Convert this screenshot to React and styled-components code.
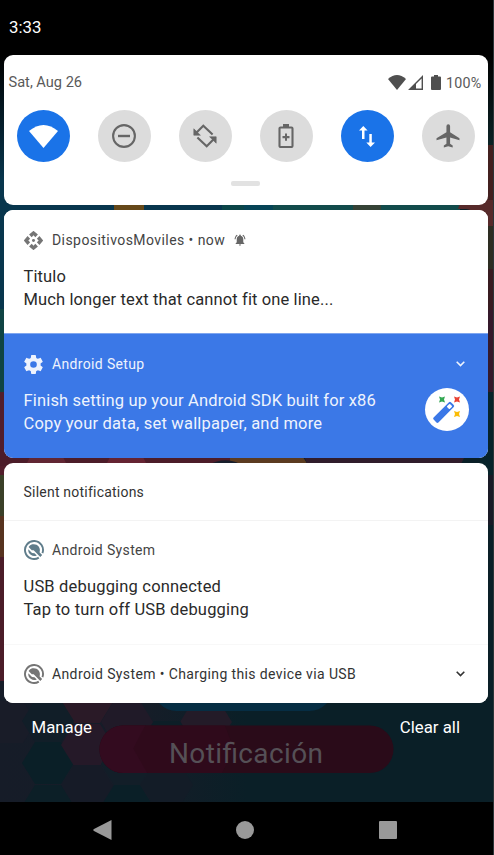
import React from "react";
import styled, { createGlobalStyle } from "styled-components";

const GlobalStyle = createGlobalStyle`
  *, *::before, *::after { box-sizing: border-box; }
  body { margin: 0; background: #000; }
`;

const Screen = styled.main`
  position: relative;
  display: flex;
  flex-direction: column;
  width: 494px;
  height: 855px;
  overflow: hidden;
  background: #0a1f27;
  border-right: 1px solid #2b3538;
  font-family: Roboto, "Liberation Sans", sans-serif;
  color: #2b2b2b;
`;

const Wallpaper = styled.svg`
  position: absolute;
  inset: 0;
  width: 493px;
  height: 855px;
`;

const Shade = styled.div`
  position: relative;
  display: flex;
  flex-direction: column;
  flex: 1;
`;

const StatusBar = styled.header`
  height: 55px;
  padding: 16px 9px 0;
  background: #000;
  color: #fff;
  font-size: 16.8px;
  line-height: 22px;
`;

const Panel = styled.section`
  width: 484px;
  height: ${(p) => p.$height}px;
  margin: 0 0 5px 4px;
  border-radius: 9px;
  background: #fff;
  overflow: hidden;
`;

const QuickHeader = styled.div`
  display: flex;
  align-items: center;
  justify-content: space-between;
  height: 20px;
  margin-top: 17px;
  padding: 0 6.500px 0 4.500px;
  color: #5a5a5a;
`;

const Label = styled.span`
  font-size: ${(p) => p.$size || 14}px;
  line-height: 20px;
  letter-spacing: ${(p) => p.$spacing || 0}px;
  white-space: pre;
`;

const Indicators = styled.div`
  display: flex;
  align-items: center;
  color: #4f4f4f;
`;

const BatteryLevel = styled(Label)`
  margin-top: 1px;
  color: #5a5a5a;
`;

const Gap = styled.span`
  width: ${(p) => p.$w}px;
`;

const Tiles = styled.div`
  display: flex;
  justify-content: space-between;
  margin-top: 18px;
  padding: 0 13.200px 0 12.800px;
`;

const Tile = styled.button`
  display: flex;
  align-items: center;
  justify-content: center;
  width: 53px;
  height: 52px;
  padding: 0;
  border: 0;
  border-radius: 50%;
  background: ${(p) => (p.$active ? "#1a73e8" : "#dcdcdc")};
  color: ${(p) => (p.$active ? "#fff" : "#666")};
`;

const Handle = styled.div`
  width: 29px;
  height: 5px;
  margin: 19px 0 0 227px;
  border-radius: 2px;
  background: #e2e2e2;
`;

const Notification = styled.article`
  height: ${(p) => p.$height}px;
  padding: ${(p) => p.$top}px 19px 0 19.500px;
  border-top: ${(p) => (p.$divider ? `1px solid ${p.$divider}` : "0")};
  background: ${(p) => (p.$blue ? "#3b78e7" : "#fff")};
  color: ${(p) => (p.$blue ? "#eef3fd" : "#2a2a2a")};
`;

const NotificationHeader = styled.div`
  display: flex;
  align-items: center;
  height: 20px;
  color: ${(p) => p.$color || "inherit"};
`;

const IconSlot = styled.span`
  display: flex;
  flex: none;
  width: 28.500px;
  padding-left: 0.500px;
  color: ${(p) => p.$color || "inherit"};
`;

const Trailing = styled.span`
  display: flex;
  margin-left: auto;
  padding-right: 4px;
`;

const BellSlot = styled.span`
  display: flex;
  margin-left: 8.500px;
  color: #666;
`;

const Body = styled.div`
  display: flex;
  justify-content: space-between;
  margin-top: 15px;
`;

const Lines = styled.div`
  display: flex;
  flex-direction: column;
`;

const Line = styled.p`
  margin: 0;
  font-size: 16.5px;
  line-height: 23.3px;
  letter-spacing: ${(p) => p.$spacing || 0}px;
  white-space: nowrap;
`;

const Avatar = styled.div`
  display: flex;
  width: 44px;
  height: 43px;
  margin-top: -1px;
  border-radius: 50%;
  background: #fff;
`;

const SectionTitle = styled.h2`
  display: flex;
  align-items: center;
  height: 57px;
  margin: 0;
  padding: 0 19.500px;
  font-weight: 400;
  color: #333;
`;

const Actions = styled.div`
  display: flex;
  justify-content: space-between;
  margin-top: 9px;
  padding: 0 33px 0 31.500px;
  color: #fff;
`;

const NavBar = styled.nav`
  position: relative;
  display: flex;
  align-items: center;
  justify-content: space-between;
  height: 53px;
  padding: 3px 96px 0 92.500px;
  background: #000;
  color: #999;
`;

const CoveredLabel = styled.text`
  font-family: Roboto, "Liberation Sans", sans-serif;
  font-size: 28px;
  fill: #555056;
`;

const hexes = [
  [10, 722, "#191c28"], [87, 702, "#2a1a27"], [48, 721, "#111e28"],
  [48, 763, "#0a1f27"], [87, 745, "#251928"], [206, 722, "#231b28"],
  [127, 722, "#201a28"], [167, 742, "#0d1e27"], [87, 786, "#161b27"],
  [127, 764, "#121e28"], [127, 806, "#0a1f27"], [48, 806, "#0c1f27"],
  [167, 785, "#131c27"],
];

function hexPoints(x, y) {
  return `${x - 26},${y} ${x - 13},${y - 21} ${x + 13},${y - 21} ${x + 26},${y} ${x + 13},${y + 21} ${x - 13},${y + 21}`;
}

function Backdrop() {
  return (
    <Wallpaper viewBox="0 0 493 855" preserveAspectRatio="none">
      <defs>
        <linearGradient id="sky" x1="0" y1="0" x2="0" y2="1">
          <stop offset="0" stopColor="#000" />
          <stop offset="1" stopColor="#08364d" />
        </linearGradient>
        <linearGradient id="dusk" x1="0" y1="0" x2="0" y2="1">
          <stop offset="0" stopColor="#000" />
          <stop offset="1" stopColor="#0b2225" />
        </linearGradient>
        <linearGradient id="floor" x1="0" y1="0" x2="1" y2="0">
          <stop offset="0" stopColor="#161c28" />
          <stop offset=".3" stopColor="#151d28" />
          <stop offset=".5" stopColor="#0a1f27" />
        </linearGradient>
      </defs>
      <rect width="493" height="855" fill="#0a1f27" />
      <rect y="55" width="247" height="125" fill="url(#sky)" />
      <rect y="180" width="247" height="130" fill="#08364d" />
      <rect y="309" width="12" height="83" fill="#0f4444" />
      <rect y="392" width="12" height="83" fill="#521e2b" />
      <rect y="475" width="12" height="41" fill="#3a4028" />
      <rect y="516" width="12" height="41" fill="#57331f" />
      <rect y="557" width="12" height="124" fill="#4b1c28" />
      <rect x="470" y="55" width="23" height="90" fill="url(#dusk)" />
      <rect x="480" y="145" width="13" height="75" fill="#43201f" />
      <rect x="480" y="220" width="13" height="49" fill="#2d2d22" />
      <rect x="480" y="269" width="13" height="41" fill="#381b20" />
      <rect x="480" y="310" width="13" height="82" fill="#35192b" />
      <rect x="480" y="392" width="13" height="83" fill="#07232a" />
      <rect x="480" y="475" width="13" height="50" fill="#191a26" />
      <rect x="114" y="204" width="30" height="8" fill="#654819" />
      <rect x="222" y="204" width="22" height="8" fill="#0b4548" />
      <rect x="244" y="204" width="29" height="8" fill="#064456" />
      <rect x="273" y="204" width="80" height="8" fill="#124b4b" />
      <rect x="353" y="204" width="28" height="8" fill="#354236" />
      <rect x="381" y="204" width="79" height="8" fill="#124b4b" />
      <path d="M461 200h32v26h-9q-7-16-18-17h-8z" fill="#572a2a" />
      <path d="M0 450h239l5 16H0z" fill="#4c1c29" />
      <path d="M30 457h33l4 8H26z" fill="#612633" />
      <path d="M110 457h33l4 8h-41z" fill="#652332" />
      <path d="M230 457h73l5 8h-78z" fill="#5b3b20" />
      <path d="M208 465q17-9 32-1l5 2z" fill="#171e2b" />
      <path d="M304 456h161l-5 10H308z" fill="#301c2b" />
      <rect y="681" width="493" height="122" fill="url(#floor)" />
      {hexes.map(([x, y, fill], i) => (
        <polygon key={i} points={hexPoints(x, y)} fill={fill} />
      ))}
      <rect x="153" y="664" width="180" height="47" rx="23.5" fill="#062d43" />
      <rect x="99.5" y="725.5" width="294" height="47.5" rx="23.7" fill="#2a0b19" />
      <path d="M123.3 725.5H225l9 24-12 23.500h-98.700a23.700 23.700 0 0 1 0-47.500z" fill="#2f0a1b" />
      <path d="M123.3 725.5h22l-12 23 14 24.500h-24a23.700 23.700 0 0 1 0-47.500z" fill="#330b1f" />
      <CoveredLabel x="169" y="763" textLength="154">Notificación</CoveredLabel>
    </Wallpaper>
  );
}

const Svg = ({ w, h = w, box = "0 0 24 24", children }) => (
  <svg width={w} height={h} viewBox={box} fill="currentColor" preserveAspectRatio="none">
    {children}
  </svg>
);

const DndIcon = () => (
  <Svg w={24}>
    <circle cx="12" cy="12" r="10.900" fill="none" stroke="currentColor" strokeWidth="2.100" />
    <rect x="6" y="10.800" width="12" height="2.400" />
  </Svg>
);

const RotateIcon = () => (
  <Svg w={24}>
    <g fill="none" stroke="currentColor" strokeWidth="2.100">
      <path d="M19.600 10.600 10.300 1.700 3.600 8.400" />
      <path d="M4.400 13.400 13.700 22.300 20.400 15.600" />
    </g>
    <path d="M.8 4.800v6.400h6.600zM23.200 19.200v-6.400h-6.600z" stroke="currentColor" strokeWidth=".6" />
  </Svg>
);

const BatterySaverIcon = () => (
  <Svg w={16} h={24} box="0 0 16 24">
    <rect x="1.500" y="3.500" width="13" height="19.500" rx="1" fill="none" stroke="currentColor" strokeWidth="2.100" />
    <path d="M5 0h6v3H5zM7 9.500h2V12h2.500v2.200H9v2.500H7v-2.500H4.500V12H7z" />
  </Svg>
);

const DataIcon = () => (
  <Svg w={16} h={21} box="0 0 16 21">
    <path d="M4.300 0 8.600 4.600H5.500v8.400H3V4.600H0zM11.600 21l-4.300-4.600h3V8h2.500v8.400H16z" />
  </Svg>
);

const PlaneIcon = () => (
  <Svg w={24} box="0.500 1 23 22">
    <path d="M23 16v-2l-9-5.500V3a1.600 1.600 0 0 0-3.500 0v5.500L1 14v2l9.500-2.700V19L8 20.700V22.500l4.200-1 4.300 1V20.700L14 19v-5.700z" />
  </Svg>
);

const WifiIcon = ({ w, h }) => (
  <Svg w={w} h={h} box="0 0 28 23">
    <path d="M0 6Q14-6 28 6L14 23z" />
  </Svg>
);

const SignalIcon = () => (
  <Svg w={15} h={15} box="0 0 15 15">
    <path fillRule="evenodd" d="M15 0v15H0zM13.600 3.500 8 9v4.600h5.600z" />
  </Svg>
);

const BatteryIcon = () => (
  <Svg w={10} h={15} box="0 0 10 15">
    <path d="M3 0h4v1.500h2a1 1 0 0 1 1 1V14a1 1 0 0 1-1 1H1a1 1 0 0 1-1-1V2.500a1 1 0 0 1 1-1h2z" />
  </Svg>
);

const ApiIcon = () => (
  <Svg w={19} box="1 1 22 22">
    <circle cx="12" cy="12" r="1.700" />
    <path d="m12 6 2.120 2.120 3-3L12 .8 6.880 5.120l3 3zm-6 6 2.120-2.120-3-3L.8 12l4.320 5.120 3-3zm12 0-2.120 2.120 3 3L23.200 12l-4.320-5.120-3 3zm-6 6-2.120-2.120-3 3L12 23.200l5.120-4.320-3-3z" />
  </Svg>
);

const BellIcon = () => (
  <Svg w={12} h={12} box="1 1.500 22 21">
    <path d="M7.600 4.100 6.200 2.700C3.800 4.500 2.200 7.300 2 10.500h2c.200-2.700 1.500-5 3.600-6.400zM20 10.500h2c-.200-3.200-1.800-6-4.200-7.800l-1.400 1.400c2.100 1.400 3.400 3.700 3.600 6.400zM18 11c0-3.100-1.600-5.600-4.500-6.300V4a1.500 1.500 0 0 0-3 0v.700C7.600 5.400 6 7.900 6 11v5l-2 2v1h16v-1l-2-2zM12 22a2 2 0 0 0 2-2h-4a2 2 0 0 0 2 2z" />
  </Svg>
);

const GearIcon = () => (
  <Svg w={19} box="2 2 20 20">
    <path d="M19.430 12.980c.040-.320.070-.640.070-.980s-.030-.660-.070-.980l2.110-1.650c.190-.150.240-.420.120-.640l-2-3.460c-.120-.220-.390-.300-.610-.220l-2.490 1c-.520-.400-1.080-.730-1.690-.980l-.380-2.650A.49.49 0 0 0 14 2h-4c-.250 0-.460.180-.490.420l-.380 2.650c-.610.250-1.170.590-1.690.980l-2.490-1c-.230-.090-.490 0-.610.220l-2 3.460c-.130.220-.070.490.120.640l2.110 1.650c-.040.320-.070.650-.070.980s.030.660.070.980l-2.110 1.650c-.190.150-.240.420-.120.640l2 3.460c.120.220.390.300.610.220l2.490-1c.520.400 1.080.730 1.690.980l.380 2.650c.030.240.240.420.490.420h4c.250 0 .460-.180.490-.420l.380-2.650c.610-.250 1.170-.590 1.690-.980l2.490 1c.230.090.490 0 .610-.220l2-3.460c.120-.220.070-.490-.120-.640zM12 15.500a3.500 3.500 0 1 1 0-7 3.500 3.500 0 0 1 0 7z" />
  </Svg>
);

const SystemIcon = () => (
  <Svg w={20} box="0 0 20 20">
    <path d="M14.800 17.600A9 9 0 1 1 18.400 13.200" fill="none" stroke="currentColor" strokeWidth="1.900" />
    <path d="M4.600 6.900A6.200 6.200 0 0 1 15.600 12.400L18.200 15 16.300 17 9.700 10.300 7.800 10.300z" />
    <path d="M4.300 9.300A6 6 0 0 0 12.800 15.400L10.500 13.300 8 13z" />
  </Svg>
);

const Chevron = () => (
  <Svg w={9} h={6} box="0 0 9 6">
    <path d="m.7.8 3.800 3.800L8.300.8" fill="none" stroke="currentColor" strokeWidth="1.600" />
  </Svg>
);

const WandIcon = () => (
  <Svg w={44} h={43} box="0 0 44 43">
    <g transform="translate(18.500 24.500) rotate(-45)">
      <rect x="-12" y="-3.400" width="24.500" height="6.800" rx="1.400" fill="#3b78e7" />
      <rect x="6.400" y="-1.900" width="4.200" height="3.800" rx=".8" fill="#fff" />
    </g>
    {[[17, 11.500, "#34a853"], [32, 11.500, "#ea4335"], [32, 26, "#fbbc05"]].map(([x, y, c]) => (
      <path key={c} transform={`translate(${x} ${y})`} fill={c} d="m-3-3 3 1 3-1-1 3 1 3-3-1-3 1 1-3z" />
    ))}
  </Svg>
);

export default function App() {
  return (
    <>
      <GlobalStyle />
      <Screen>
        <Backdrop />
        <Shade>
          <StatusBar>3:33</StatusBar>
          <Panel $height={150}>
            <QuickHeader>
              <Label $size={14.6}>Sat, Aug 26</Label>
              <Indicators>
                <WifiIcon w={18} h={15} />
                <Gap $w={2} />
                <SignalIcon />
                <Gap $w={8} />
                <BatteryIcon />
                <Gap $w={5} />
                <BatteryLevel $size={14.3} $spacing={0.2}>100%</BatteryLevel>
              </Indicators>
            </QuickHeader>
            <Tiles>
              <Tile $active aria-label="Wi-Fi"><WifiIcon w={29} h={23} /></Tile>
              <Tile aria-label="Do not disturb"><DndIcon /></Tile>
              <Tile aria-label="Auto-rotate"><RotateIcon /></Tile>
              <Tile aria-label="Battery saver"><BatterySaverIcon /></Tile>
              <Tile $active aria-label="Mobile data"><DataIcon /></Tile>
              <Tile aria-label="Airplane mode"><PlaneIcon /></Tile>
            </Tiles>
            <Handle />
          </Panel>
          <Panel $height={248}>
            <Notification $height={123} $top={20}>
              <NotificationHeader $color="#444">
                <IconSlot $color="#757575"><ApiIcon /></IconSlot>
                <Label $spacing={0.43}>DispositivosMoviles • now</Label>
                <BellSlot><BellIcon /></BellSlot>
              </NotificationHeader>
              <Body>
                <Lines>
                  <Line $spacing={0.12}>Titulo</Line>
                  <Line $spacing={0.12}>Much longer text that cannot fit one line...</Line>
                </Lines>
              </Body>
            </Notification>
            <Notification $height={125} $top={20} $blue $divider="#7fa6ef">
              <NotificationHeader>
                <IconSlot><GearIcon /></IconSlot>
                <Label $spacing={0.35}>Android Setup</Label>
                <Trailing><Chevron /></Trailing>
              </NotificationHeader>
              <Body>
                <Lines>
                  <Line $spacing={0.16}>Finish setting up your Android SDK built for x86</Line>
                  <Line $spacing={0.2}>Copy your data, set wallpaper, and more</Line>
                </Lines>
                <Avatar><WandIcon /></Avatar>
              </Body>
            </Notification>
          </Panel>
          <Panel $height={240}>
            <SectionTitle><Label $spacing={0.22}>Silent notifications</Label></SectionTitle>
            <Notification $height={124} $top={19} $divider="#f3f3f3">
              <NotificationHeader $color="#444">
                <IconSlot $color="#607d8b"><SystemIcon /></IconSlot>
                <Label $spacing={0.35}>Android System</Label>
              </NotificationHeader>
              <Body>
                <Lines>
                  <Line $spacing={0.18}>USB debugging connected</Line>
                  <Line $spacing={0.17}>Tap to turn off USB debugging</Line>
                </Lines>
              </Body>
            </Notification>
            <Notification $height={59} $top={19} $divider="#f8f8f8">
              <NotificationHeader $color="#333">
                <IconSlot $color="#757575"><SystemIcon /></IconSlot>
                <Label $spacing={0.38}>Android System • Charging this device via USB</Label>
                <Trailing><Chevron /></Trailing>
              </NotificationHeader>
            </Notification>
          </Panel>
          <Actions>
            <Label $size={16.8}>Manage</Label>
            <Label $size={16.8}>Clear all</Label>
          </Actions>
        </Shade>
        <NavBar>
          <Svg w={19} h={20} box="0 0 19 20"><path d="M18.500 0v20L1 11q-1.500-1 0-2z" /></Svg>
          <Svg w={18} box="0 0 18 18"><circle cx="9" cy="9" r="9" /></Svg>
          <Svg w={18} box="0 0 18 18"><rect width="18" height="18" rx="1" /></Svg>
        </NavBar>
      </Screen>
    </>
  );
}
